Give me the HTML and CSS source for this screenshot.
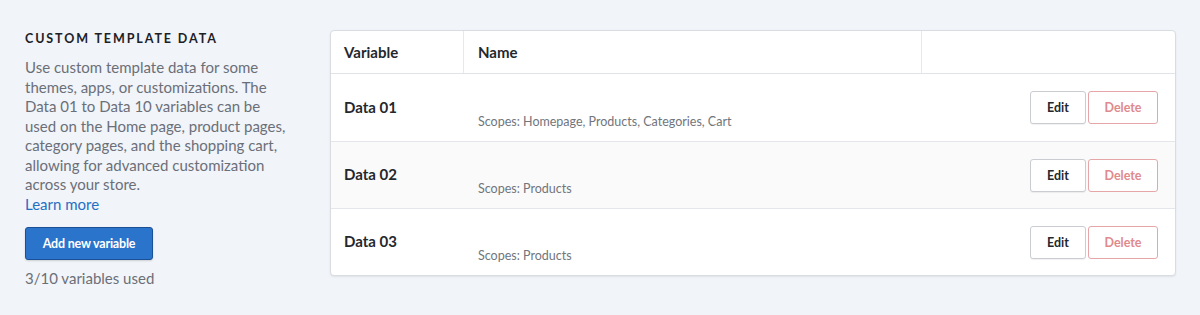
FILE: index.html
```html
<!DOCTYPE html>
<html>
<head>
<meta charset="utf-8">
<link rel="stylesheet" href="styles.css">
</head>
<body>
<div class="page">
  <aside class="intro">
    <h2 class="title">CUSTOM TEMPLATE DATA</h2>
    <p class="desc">Use custom template data for some themes, apps, or customizations. The Data 01 to Data 10 variables can be used on the Home page, product pages, category pages, and the shopping cart, allowing for advanced customization across your store.<br><a class="link" href="#">Learn more</a></p>
    <button class="btn-primary">Add new variable</button>
    <div class="usage">3/10 variables used</div>
  </aside>
  <section class="card">
    <div class="row head">
      <div class="cell c-var">Variable</div>
      <div class="cell c-name">Name</div>
      <div class="cell c-act"></div>
    </div>
    <div class="row">
      <div class="cell c-var strong">Data 01</div>
      <div class="cell c-name"><span class="scope">Scopes: Homepage, Products, Categories, Cart</span></div>
      <div class="cell c-act"><button class="btn">Edit</button><button class="btn danger">Delete</button></div>
    </div>
    <div class="row alt">
      <div class="cell c-var strong">Data 02</div>
      <div class="cell c-name"><span class="scope">Scopes: Products</span></div>
      <div class="cell c-act"><button class="btn">Edit</button><button class="btn danger">Delete</button></div>
    </div>
    <div class="row">
      <div class="cell c-var strong">Data 03</div>
      <div class="cell c-name"><span class="scope">Scopes: Products</span></div>
      <div class="cell c-act"><button class="btn">Edit</button><button class="btn danger">Delete</button></div>
    </div>
  </section>
</div>
</body>
</html>
```
FILE: styles.css
```css
html, body {
  margin: 0;
  padding: 0;
  background: #f1f4f8;
  font-family: Lato, "Open Sans", Arial, sans-serif;
}
.page {
  display: flex;
  align-items: flex-start;
  padding: 30px 24px 0 25px;
  gap: 43px;
}
.intro {
  width: 262px;
  flex: none;
}
.title {
  margin: 1px 0 0;
  font-size: 12.5px;
  font-weight: 700;
  letter-spacing: 1.9px;
  color: #1d2126;
  line-height: 16px;
}
.desc {
  margin: 11px 0 0;
  font-size: 15px;
  line-height: 19.5px;
  color: #6b6f78;
}
.link {
  color: #1f6fc5;
  text-decoration: none;
}
.btn-primary {
  margin-top: 13px;
  width: 128px;
  height: 33px;
  background: #2a74cb;
  border: 1px solid #1b4f96;
  border-radius: 3px;
  color: #fff;
  font-family: Lato, Arial, sans-serif;
  font-weight: 700;
  font-size: 12.5px;
  letter-spacing: -0.2px;
  box-shadow: 0 1px 2px rgba(0,0,0,0.15);
  padding: 0;
}
.usage {
  margin-top: 9px;
  font-size: 15px;
  color: #6b6f78;
}
.card {
  width: 846px;
  background: #fff;
  border: 1px solid #d9dde2;
  border-radius: 4px;
  box-shadow: 0 1px 2px rgba(0,0,0,0.08);
  overflow: hidden;
  box-sizing: border-box;
}
.row {
  display: flex;
  height: 67px;
  box-sizing: border-box;
  border-top: 1px solid #e3e6ea;
}
.row.alt { background: #fafafa; }
.row.head {
  height: 43px;
  border-top: none;
  border-bottom: 1px solid #e0e3e7;
}
.row.head + .row { border-top: none; }
.cell {
  display: flex;
  align-items: center;
  box-sizing: border-box;
}
.c-var {
  width: 133px;
  padding-left: 13px;
}
.c-name {
  width: 458px;
  padding-left: 14px;
}
.c-act {
  flex: 1;
  justify-content: flex-end;
  padding-right: 17px;
  gap: 2px;
}
.head .cell {
  font-weight: 700;
  font-size: 15px;
  color: #24282d;
}
.head .c-var, .head .c-name { border-right: 1px solid #e6e8eb; }
.strong {
  font-weight: 700;
  font-size: 15px;
  color: #24282d;
  padding-bottom: 2px;
}
.row:not(.head) .c-name {
  align-items: flex-end;
  padding-bottom: 12px;
}
.scope {
  font-size: 12.5px;
  color: #71757c;
}
.btn {
  height: 33px;
  width: 56px;
  padding: 0;
  background: #fff;
  border: 1px solid #c9cdd2;
  border-radius: 3px;
  color: #24282d;
  font-family: Lato, Arial, sans-serif;
  font-weight: 700;
  font-size: 12.5px;
  box-shadow: 0 1px 1px rgba(0,0,0,0.06);
}
.btn.danger {
  width: 70px;
  border-color: #e5a6a8;
  color: #df8a8d;
  box-shadow: none;
}
```
